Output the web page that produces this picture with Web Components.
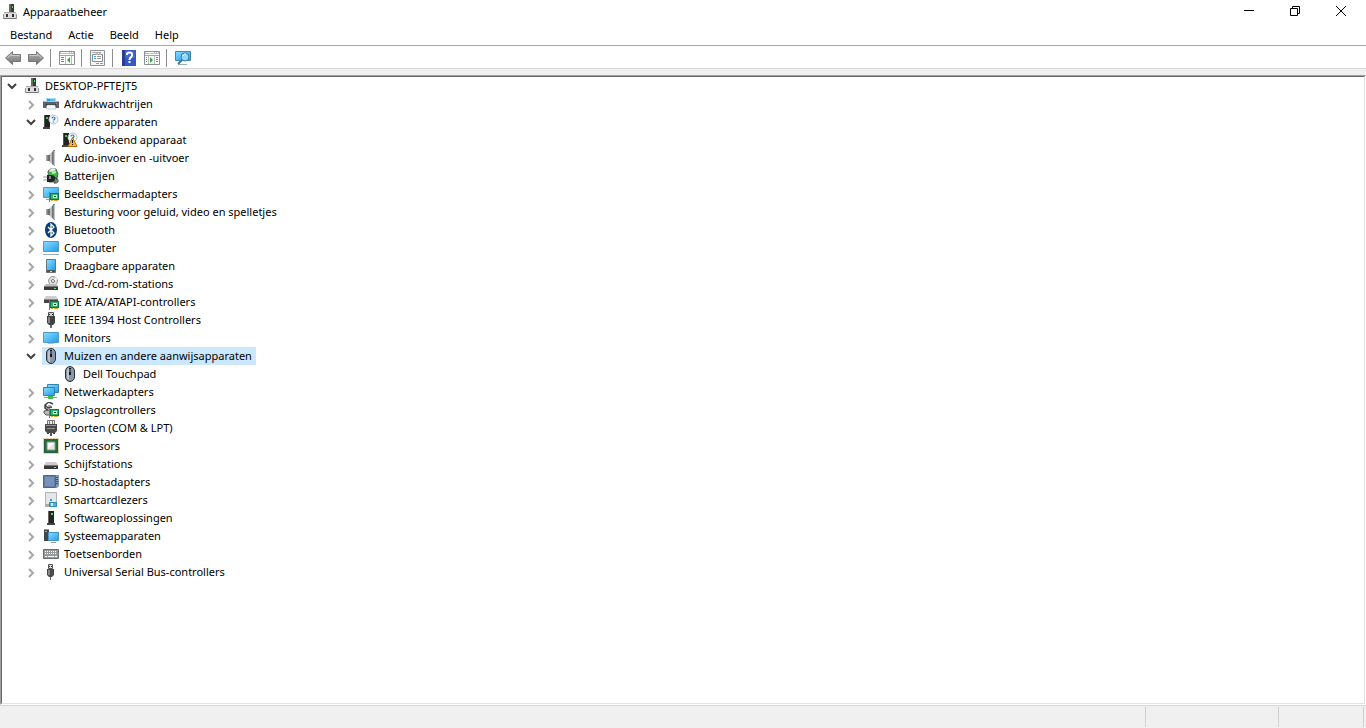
<!DOCTYPE html>
<html lang="nl">
<head>
<meta charset="utf-8">
<title>Apparaatbeheer</title>
<style>
  body {
    margin: 0;
    font: 11px/18px "Noto Sans", "Open Sans", sans-serif;
    color: #000;
    background: #f0f0f0;
  }
</style>
</head>
<body>
<device-manager></device-manager>

<script>
// All icons are drawn on a 16 x 16 grid.
const SCREEN = '<linearGradient id="s" x1="0" y1="0" x2="1" y2="1"><stop stop-color="#8bdcff"/><stop offset="1" stop-color="#1f9cec"/></linearGradient>';
const METAL = '<linearGradient id="m" x1="0" x2="1"><stop stop-color="#777"/><stop offset=".5" stop-color="#d8d8d8"/><stop offset="1" stop-color="#555"/></linearGradient>';
const GREY = '<linearGradient id="g" x1="0" y1="0" x2="0" y2="1"><stop stop-color="#b8b8b8"/><stop offset="1" stop-color="#707070"/></linearGradient>';
const CARD = '<path d="M7 7h9v7H7z" fill="#0c7a48"/><path d="M8 8h7v5H8z" fill="#35b36c"/><path d="M10 9h4v3h-4z" fill="#d5efd9"/><path d="M11 10h2v1h-2z" fill="#0b4f28"/><path d="M8 14h2v1H8zM11 14h4v1h-4z" fill="#e0a52a"/><path d="M6 6h1v10H6z" fill="#777"/>';
const SPEAKER = `<defs>${METAL}</defs><path d="M3 5h3v6H3z" fill="#888"/><path d="M3 5h1v6H3z" fill="#aaa"/><path d="M6 5l4-4v14l-4-4z" fill="url(#m)"/><path d="M6 5v6" stroke="#555"/><path d="M10 0h2v16l-2-1z" fill="#7d8790"/><path d="M11.500 1v14" stroke="#c1c9cf"/>`;
const MOUSE = '<rect x="3.500" y=".5" width="9" height="15" rx="4.500" fill="#8b97a5" stroke="#29303a"/><path d="M5 5a3 3 0 0 1 2-3v12a3 3 0 0 1-2-3z" fill="#bac5d1"/><path d="M7 2h2v7H7z" fill="#14181e"/><path d="M8 3v3" stroke="#8e9aab"/>';
const TOWER = '<path d="M1 1h6v12H1z" fill="#222"/><path d="M1 1h1v12H1z" fill="#555"/><path d="M0 13h7v2H0z" fill="#444"/><path d="M3 3h2v2H3z" fill="#35d04a"/>';
const QUESTION = '<circle cx="10.500" cy="5.500" r="4.500" fill="#f4f9fc" stroke="#b4bfc5"/><path d="M9 4.500c0-2 3-2 3 0 0 1-1.500 1-1.500 2M10.500 7.500v1" fill="none" stroke="#247dbd" stroke-width="1.200"/>';
const PANE = '<path d="M.500 1.500h15v13H.500z" fill="#fff" stroke="#8b9094"/><path d="M1 2h14v2H1z" fill="#b7bfc5"/><path d="M2 2h8v1H2zM11 2h1v1h-1zM13 2h1v1h-1z" fill="#fff"/><path d="M1 5.500h14" stroke="#9da5ab"/>';

const ICONS = {
  host: '<path d="M7 0h5v8H7z" fill="#3a3a3a"/><path d="M7 0h2v8H7z" fill="#686868"/><path d="M10 2h1v2h-1z" fill="#42e05b"/><path d="M2 8h12v7H2z" fill="#dcdcdc"/><path d="M2 8h12v1H2z" fill="#aaa"/><path d="M2 14h12v1H2z" fill="#777"/><path d="M4 10h2v3H4zM10 10h2v3h-2z" fill="#333"/><path d="M1 10h1v5H1zM14 10h1v5h-1z" fill="#999"/>',
  printer: '<path d="M3 2h10v4H3z" fill="#a2def5"/><path d="M4 3h3v2H4z" fill="#249fe2"/><path d="M7 3h5v2H7z" fill="#54bced"/><path d="M1 5h14l1 1v6H0V6z" fill="#5b6167"/><path d="M1 5h14v1H1z" fill="#b8bec2"/><path d="M3 8h10v2H3z" fill="#303539"/><path d="M4 9h8l1 4H3z" fill="#f8fbfc" stroke="#9ba4aa" stroke-width=".5"/><path d="M13 7h1v1h-1z" fill="#4bd75b"/>',
  unknown: TOWER + QUESTION,
  warning: TOWER + QUESTION + '<path d="M10.500 5.500l4.500 9H6z" fill="#ffb52e" stroke="#b96b00"/><path d="M10 8h1v3h-1zM10 12h1v1h-1z" fill="#111"/>',
  speaker: SPEAKER,
  battery: '<path d="M5 3l3-2 5 0 2 5-2 8-7 0z" fill="#35b947" stroke="#4e6254"/><path d="M6 2l3-2h3l1 2-3 2H6z" fill="#e7eee7" stroke="#777" stroke-width=".5"/><path d="M9 5l4-1" stroke="#bbf5b0" stroke-width="2"/><path d="M0 9h4M0 12h4" stroke="#999"/><path d="M4 7h3c4 0 5 1 5 3.500S11 14 7 14H4z" fill="#222"/><path d="M6 8h2v3H6z" fill="#888"/><path d="M12 10c2 0 3 1 3 3s-2 2-4 2" fill="none" stroke="#222"/>',
  display: `<defs>${SCREEN}</defs><path d="M.500 1.500h15v10H.500z" fill="url(#s)" stroke="#4b9ccb"/><path d="M3 13h4v1H3z" fill="#90a5b1"/>${CARD}`,
  bluetooth: '<ellipse cx="8" cy="8" rx="6" ry="8" fill="#063f79"/><path d="M5 5l6 6-3 3V2l3 3-6 6" fill="none" stroke="#fff" stroke-width="1.300"/>',
  computer: `<defs>${SCREEN}</defs><path d="M.500 1.500h15v10H.500z" fill="url(#s)" stroke="#5a96ba"/><path d="M0 14h16v1H0z" fill="#9aafbb"/>`,
  portable: `<defs>${SCREEN}</defs><path d="M3.500 1.500h9v13h-9z" fill="#4e5356" stroke="#6d7478"/><path d="M4 2h8v10H4z" fill="url(#s)"/><path d="M7 13h2v1H7z" fill="#ddd"/>`,
  disc: '<circle cx="10" cy="5" r="4.500" fill="#ddd" stroke="#999"/><path d="M10 5l3-4 1 3z" fill="#fff"/><circle cx="10" cy="5" r="1.500" fill="#fff" stroke="#777"/><path d="M3 8h10l2 2H1z" fill="#bbb"/><path d="M1 10h14v4H1z" fill="#393939"/><path d="M1 10h14v1H1z" fill="#777"/><path d="M11 12h2v1h-2z" fill="#4bea5a"/>',
  ide: '<path d="M3 2h10l2 3H1z" fill="#cfcfcf"/><path d="M1 5h14v4H1z" fill="#444"/><path d="M1 5h14v1H1z" fill="#888"/>' + CARD,
  firewire: '<path d="M5.500.500h5v4h-5z" fill="#ccc" stroke="#555"/><path d="M6 2h1v1H6zM9 2h1v1H9z" fill="#222"/><path d="M4 4h8v7l-2 2H6l-2-2z" fill="#424242"/><path d="M5 5h2v6H5z" fill="#858585"/><path d="M7 13h2v3H7z" fill="#666"/>',
  monitor: `<defs>${SCREEN}</defs><path d="M.500 2.500h15v10H.500z" fill="url(#s)" stroke="#4b9ccb"/><path d="M5 13h6v1H5z" fill="#b5bec3"/>`,
  mouse: MOUSE,
  network: `<defs>${SCREEN}</defs><path d="M4.500.500h11v8h-11z" fill="url(#s)" stroke="#3384af"/><path d="M.500 3.500h11v8H.500z" fill="url(#s)" stroke="#3384af"/><path d="M6 12h2v1H6z" fill="#36ac44"/><path d="M1 13h13v1H1z" fill="#59ca56"/><path d="M5 12h5v3H5z" fill="#42ba4d"/>`,
  storage: '<path d="M10 2L6 0 2 3l3 3 4-1M2 3v3l4 3" fill="none" stroke="#444" stroke-width="1.500"/><path d="M5 4h3" stroke="#555"/><path d="M1 9l5-1 2 2v3H3l-2-2z" fill="#b7bbbd" stroke="#555"/>' + CARD,
  port: '<path d="M4.500.500h7v4h-7z" fill="#eee" stroke="#777"/><path d="M6 1h1v3H6zM9 1h1v3H9z" fill="#777"/><path d="M2 4h12v7l-2 2H4l-2-2z" fill="#4b4b4b"/><path d="M3 5h10v1H3zM4 8h8v1H4z" fill="#929292"/><path d="M4 13h2v1H4zM10 13h2v1h-2z" fill="#444"/><path d="M7 13h2v3H7z" fill="#555"/>',
  processor: '<path d="M.5.500h15v15H.5z" fill="none" stroke="#c4a851" stroke-dasharray="1 1"/><path d="M1 1h14v14H1z" fill="#24683f"/><path d="M4 4h8v8H4z" fill="#e5e8e6" stroke="#8c9a91"/><path d="M5 5h6L5 11z" fill="#fff"/>',
  drive: '<path d="M3 6h10l2 3H1z" fill="#ccc"/><path d="M1 9h14v4H1z" fill="#383838"/><path d="M1 9h14v1H1z" fill="#777"/><path d="M11 11h2v1h-2z" fill="#59ed5d"/>',
  sd: '<path d="M.500 1.500h12v12H.500z" fill="#617fa8" stroke="#486487"/><path d="M13 1h3v11l-2 2h-1z" fill="#8298b4"/><path d="M2 3h9v9H2z" fill="#7692b9"/><path d="M13 3.500h2M13 5.500h2M13 7.500h2M13 9.500h2" stroke="#3d5779"/>',
  smartcard: '<path d="M2.500.500h11v14h-11z" fill="#e3e7e9" stroke="#adb3b7"/><path d="M7 7h2v2H7z" fill="#2ba0e4"/><path d="M3 12h3v2H3z" fill="#a4aaaf"/><path d="M6.500 10.500h7v4h-7z" fill="#42b3ed" stroke="#3586ba"/><path d="M8 11h2v3H8z" fill="#dcf5ff"/>',
  software: '<path d="M5 1h6v12H5z" fill="#252525"/><path d="M5 1h1v12H5z" fill="#656565"/><path d="M4 13h8v2H4z" fill="#444"/><path d="M8 3h2v2H8z" fill="#49e65b"/>',
  system: `<defs>${SCREEN}</defs><path d="M1 1h5v12H1z" fill="#42474a"/><path d="M1 1h5v1H1z" fill="#8e9599"/><path d="M2 3h2v1H2z" fill="#47df58"/><path d="M5.500 4.500h10v8h-10z" fill="url(#s)" stroke="#4793bf"/><path d="M8 14h5v1H8z" fill="#8a9da9"/>`,
  keyboard: '<path d="M.500 3.500h15v9H.500z" fill="#999" stroke="#686f73"/><path d="M2 5.500h12M2 7.500h12" stroke="#fff" stroke-dasharray="1 1"/><path d="M2 10h2v1H2zM5 10h6v1H5zM12 10h2v1h-2z" fill="#fff"/>',
  usb: '<path d="M5.500.500h4v4h-4z" fill="#ddd" stroke="#555"/><path d="M6 2h1v1H6zM8 2h1v1H8z" fill="#333"/><path d="M4 5h7v6l-2 2H6l-2-2z" fill="#4b4b4b"/><path d="M5 6h2v5H5z" fill="#888"/><path d="M7 13h1v3H7z" fill="#666"/>',
  back: `<defs>${GREY}</defs><path d="M.5 8L7.500 1.500v3h8v7h-8v3z" fill="url(#g)" stroke="#777"/><path d="M2.500 8L6.500 4v1.500h8" fill="none" stroke="#ccc"/>`,
  forward: `<defs>${GREY}</defs><path d="M15.500 8L8.500 1.500v3h-8v7h8v3z" fill="url(#g)" stroke="#777"/><path d="M1.500 5.500h8V4l4 4" fill="none" stroke="#ccc"/>`,
  tree: PANE + '<path d="M6.500 6v8M12.500 6v8" stroke="#b5babd"/><path d="M2 7.500h3M2 9.500h3M2 11.500h3" stroke="#777f85"/><path d="M11 7v6l-3-3z" fill="#2cad2f"/>',
  properties: '<path d="M.5.500h14v15H.5z" fill="#f5f5f5" stroke="#8c9296"/><path d="M2.500 4.500h10v7h-10z" fill="#fff" stroke="#858d93"/><path d="M2 2h9v1H2z" fill="#aaa"/><path d="M6 3h2v2H6zM9 3h2v2H9z" fill="#bbb"/><path d="M4 6h2v1H4zM4 8h2v1H4z" fill="#29afe2"/><path d="M7 6h4v1H7zM7 8h4v1H7z" fill="#999"/><path d="M6 13h3v1H6zM10 13h3v1h-3z" fill="#30bee5"/>',
  help: '<path d="M1 0h14v16H1z" fill="#3658c5"/><path d="M1 0h3v16H1z" fill="#263f94"/><path d="M4 1h10v7H4z" fill="#5577d5" opacity=".5"/><path d="M6 5V4c0-2 5-2 5 0v2c0 1-2.500 1-2.500 4M8.500 11v2" fill="none" stroke="#fff" stroke-width="2"/>',
  action: PANE + '<path d="M4.500 6v8M10.500 6v8" stroke="#b5babd"/><path d="M2 7.500h1M2 9.500h1M2 11.500h1M12 7.500h2M12 9.500h2M12 11.500h2" stroke="#777f85"/><path d="M6 7v6l3-3z" fill="#2cad2f"/>',
  scan: `<defs>${SCREEN}</defs><path d="M.500 1.500h15v9H.500z" fill="url(#s)" stroke="#4389ad"/><path d="M3 14h9v1H3z" fill="#9ab0bd"/><path d="M7.500 9.500L3 14" stroke="#45799a" stroke-width="2"/><circle cx="10" cy="7" r="4" fill="#8fd8fa" stroke="#2f80b2"/><path d="M8 6c0-1 1-2 3-2" fill="none" stroke="#fff"/>`,
  minimize: '<path d="M3 7.500h10" stroke="#000"/>',
  restore: '<path d="M3.500 5.500h7v7h-7zM5.500 5.500v-2h7v7h-2" fill="none" stroke="#000"/>',
  close: '<path d="M3 3l10 10M13 3L3 13" stroke="#000"/>',
  chevron: '<path d="M6 5l4 4-4 4" fill="none" stroke="#a6a6a6" stroke-width="2"/>',
  chevronOpen: '<path d="M4 6l4 4 4-4" fill="none" stroke="#404040" stroke-width="2"/>'
};

class DmIcon extends HTMLElement {
  constructor() {
    super();
    this.attachShadow({ mode: 'open' });
  }

  static get observedAttributes() {
    return ['name'];
  }

  attributeChangedCallback() {
    this.shadowRoot.innerHTML = `
      <style>
        :host { display: block; flex: none; width: 16px; height: 16px; }
        svg { display: block; width: 100%; height: 100%; }
      </style>
      <svg viewBox="0 0 16 16" aria-hidden="true">${ICONS[this.getAttribute('name')] || ''}</svg>
    `;
  }
}

class TitleBar extends HTMLElement {
  constructor() {
    super();
    this.attachShadow({ mode: 'open' }).innerHTML = `
      <style>
        :host { display: flex; align-items: flex-start; height: 24px; padding: 0 2px; background: #fff; }
        h1 { display: flex; flex: 1; align-items: center; gap: 5px; height: 23px; margin: 0; font: inherit; }
        button { display: grid; place-items: center; width: 46px; height: 22px; padding: 0; border: 0; background: none; }
        button:hover { background: #e5e5e5; }
      </style>
      <h1><dm-icon name="host"></dm-icon><slot></slot></h1>
      <button aria-label="Minimaliseren"><dm-icon name="minimize"></dm-icon></button>
      <button aria-label="Verkleinen"><dm-icon name="restore"></dm-icon></button>
      <button aria-label="Sluiten"><dm-icon name="close"></dm-icon></button>
    `;
  }
}

class MenuBar extends HTMLElement {
  constructor() {
    super();
    this.attachShadow({ mode: 'open' }).innerHTML = `
      <style>
        :host { display: block; padding: 0 2px; background: #fff; border-bottom: 1px solid #aaa; }
        nav { display: flex; height: 21px; }
        button { padding: 0 8px; border: 0; background: none; font: inherit; color: inherit; }
        button:hover { background: #cce8ff; }
      </style>
      <nav>
        <button>Bestand</button>
        <button>Actie</button>
        <button>Beeld</button>
        <button>Help</button>
      </nav>
    `;
  }
}

class ToolBar extends HTMLElement {
  constructor() {
    super();
    this.attachShadow({ mode: 'open' }).innerHTML = `
      <style>
        :host { display: flex; align-items: center; height: 20px; padding: 2px 2px 0; background: #fff; border-bottom: 1px solid #d9d9d9; }
        button { display: flex; align-items: center; width: 23px; height: 20px; padding: 0 4px 0 3px; border: 0; background: none; }
        button:hover { background: #e5f3ff; }
        i { width: 1px; height: 18px; margin: 0 5px 0 2px; background: #8d8d8d; }
      </style>
      <button aria-label="Vorige"><dm-icon name="back"></dm-icon></button>
      <button aria-label="Volgende"><dm-icon name="forward"></dm-icon></button>
      <i></i>
      <button aria-label="Consolestructuur"><dm-icon name="tree"></dm-icon></button>
      <i></i>
      <button aria-label="Eigenschappen"><dm-icon name="properties"></dm-icon></button>
      <i></i>
      <button aria-label="Help"><dm-icon name="help"></dm-icon></button>
      <button aria-label="Actievenster"><dm-icon name="action"></dm-icon></button>
      <i></i>
      <button aria-label="Zoeken naar gewijzigde apparaten"><dm-icon name="scan"></dm-icon></button>
    `;
  }
}

class TreeItem extends HTMLElement {
  constructor() {
    super();
    this.attachShadow({ mode: 'open' });
  }

  connectedCallback() {
    this.setAttribute('role', 'treeitem');
    this.shadowRoot.innerHTML = `
      <style>
        :host { display: block; }
        .row { display: flex; align-items: center; height: 18px; }
        .toggle { display: grid; place-items: center; flex: none; width: 18px; height: 18px; margin-right: 2px; padding: 0; border: 0; background: none; }
        :host([leaf]) .toggle { visibility: hidden; }
        .label { display: flex; align-items: center; gap: 5px; height: 18px; padding: 0 4px 0 1px; white-space: nowrap; cursor: default; }
        :host([selected]) .label { background: #cce8ff; }
        .children { display: none; padding-left: 19px; }
        :host([open]) > .children, :host([open]) .children { display: block; }
      </style>
      <div class="row">
        <button class="toggle" aria-label="Uitvouwen"><dm-icon></dm-icon></button>
        <span class="label"><dm-icon name="${this.getAttribute('icon')}"></dm-icon><span>${this.getAttribute('label')}</span></span>
      </div>
      <div class="children" role="group"><slot></slot></div>
    `;
    this.shadowRoot.querySelector('.toggle').addEventListener('click', () => {
      this.toggleAttribute('open');
      this._updateToggle();
    });
    this.shadowRoot.querySelector('.label').addEventListener('click', () => {
      const current = this.closest('tree-view').querySelector('[selected]');
      if (current) current.removeAttribute('selected');
      this.setAttribute('selected', '');
    });
    this._updateToggle();
  }

  _updateToggle() {
    const name = this.hasAttribute('open') ? 'chevronOpen' : 'chevron';
    this.shadowRoot.querySelector('.toggle dm-icon').setAttribute('name', name);
  }
}

class TreeView extends HTMLElement {
  constructor() {
    super();
    this.attachShadow({ mode: 'open' }).innerHTML = `
      <style>
        :host {
          display: block;
          background: #fff;
          border: 1px solid;
          border-color: #a0a0a0 #fff #fff #a0a0a0;
        }
        .inner {
          box-sizing: border-box;
          height: 100%;
          padding-left: 1px;
          overflow: auto;
          border: 1px solid;
          border-color: #696969 #e3e3e3 #e3e3e3 #696969;
        }
      </style>
      <div class="inner" role="tree"><slot></slot></div>
    `;
  }
}

class StatusBar extends HTMLElement {
  constructor() {
    super();
    this.attachShadow({ mode: 'open' }).innerHTML = `
      <style>
        :host { display: flex; box-sizing: border-box; height: 23px; padding: 1px 2px 1px 0; border-top: 1px solid #d7d7d7; background: #f0f0f0; }
        span { box-sizing: border-box; border-right: 1px solid #d0d0d0; }
        .message { flex: 1; }
        .wide { width: 133px; }
        .narrow { width: 85px; }
      </style>
      <span class="message"></span>
      <span class="wide"></span>
      <span class="narrow"></span>
    `;
  }
}

class DeviceManager extends HTMLElement {
  constructor() {
    super();
    this.attachShadow({ mode: 'open' }).innerHTML = `
      <style>
        :host { display: flex; flex-direction: column; height: 100vh; }
        tree-view { flex: 1; min-height: 0; margin-top: 6px; }
      </style>
      <title-bar>Apparaatbeheer</title-bar>
      <menu-bar></menu-bar>
      <tool-bar></tool-bar>
      <tree-view>
        <tree-item open icon="host" label="DESKTOP-PFTEJT5">
          <tree-item icon="printer" label="Afdrukwachtrijen"></tree-item>
          <tree-item open icon="unknown" label="Andere apparaten">
            <tree-item leaf icon="warning" label="Onbekend apparaat"></tree-item>
          </tree-item>
          <tree-item icon="speaker" label="Audio-invoer en -uitvoer"></tree-item>
          <tree-item icon="battery" label="Batterijen"></tree-item>
          <tree-item icon="display" label="Beeldschermadapters"></tree-item>
          <tree-item icon="speaker" label="Besturing voor geluid, video en spelletjes"></tree-item>
          <tree-item icon="bluetooth" label="Bluetooth"></tree-item>
          <tree-item icon="computer" label="Computer"></tree-item>
          <tree-item icon="portable" label="Draagbare apparaten"></tree-item>
          <tree-item icon="disc" label="Dvd-/cd-rom-stations"></tree-item>
          <tree-item icon="ide" label="IDE ATA/ATAPI-controllers"></tree-item>
          <tree-item icon="firewire" label="IEEE 1394 Host Controllers"></tree-item>
          <tree-item icon="monitor" label="Monitors"></tree-item>
          <tree-item open selected icon="mouse" label="Muizen en andere aanwijsapparaten">
            <tree-item leaf icon="mouse" label="Dell Touchpad"></tree-item>
          </tree-item>
          <tree-item icon="network" label="Netwerkadapters"></tree-item>
          <tree-item icon="storage" label="Opslagcontrollers"></tree-item>
          <tree-item icon="port" label="Poorten (COM &amp; LPT)"></tree-item>
          <tree-item icon="processor" label="Processors"></tree-item>
          <tree-item icon="drive" label="Schijfstations"></tree-item>
          <tree-item icon="sd" label="SD-hostadapters"></tree-item>
          <tree-item icon="smartcard" label="Smartcardlezers"></tree-item>
          <tree-item icon="software" label="Softwareoplossingen"></tree-item>
          <tree-item icon="system" label="Systeemapparaten"></tree-item>
          <tree-item icon="keyboard" label="Toetsenborden"></tree-item>
          <tree-item icon="usb" label="Universal Serial Bus-controllers"></tree-item>
        </tree-item>
      </tree-view>
      <status-bar></status-bar>
    `;
  }
}

customElements.define('dm-icon', DmIcon);
customElements.define('title-bar', TitleBar);
customElements.define('menu-bar', MenuBar);
customElements.define('tool-bar', ToolBar);
customElements.define('tree-item', TreeItem);
customElements.define('tree-view', TreeView);
customElements.define('status-bar', StatusBar);
customElements.define('device-manager', DeviceManager);
</script>
</body>
</html>
